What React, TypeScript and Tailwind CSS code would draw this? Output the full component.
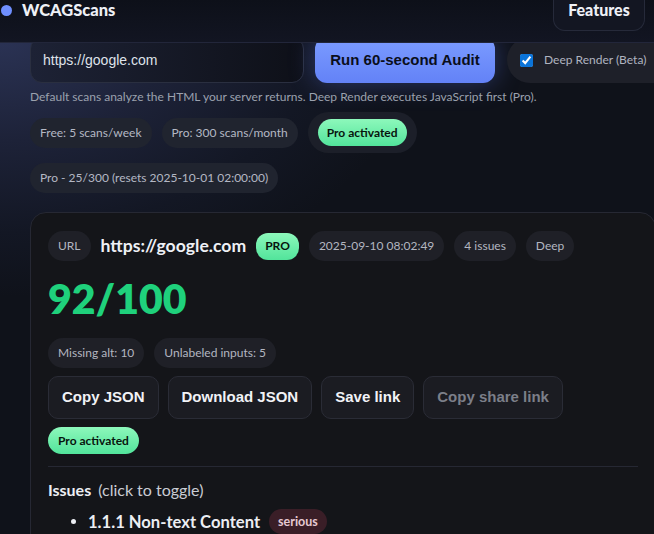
import React from 'react';

const BODY = { fontFamily: 'Lato, "Noto Sans", sans-serif' };
const CONTROL = { fontFamily: '"Liberation Sans", Arial, sans-serif' };

function Chip({ children, dark }: { children: React.ReactNode; dark?: boolean }) {
  return (
    <span
      className={`inline-flex items-center h-[30px] px-[10px] rounded-full text-[12px] whitespace-nowrap ${
        dark ? 'bg-[#1f2027] text-[#b3b6c0]' : 'bg-[#20242f] text-[#b4b8c4]'
      }`}
    >
      {children}
    </span>
  );
}

function GreenPill({ children, className = '' }: { children: React.ReactNode; className?: string }) {
  return (
    <span
      className={`inline-flex items-center justify-center font-bold text-[#07140d] bg-[linear-gradient(180deg,#8df8bb,#52e49b)] whitespace-nowrap ${className}`}
    >
      {children}
    </span>
  );
}

const ACTIONS = [
  { label: 'Copy JSON', disabled: false },
  { label: 'Download JSON', disabled: false },
  { label: 'Save link', disabled: false },
  { label: 'Copy share link', disabled: true },
];

export default function App() {
  return (
    <div className="min-h-screen w-full overflow-hidden bg-[#0f121a] text-white" style={BODY}>
      {/* Header */}
      <header className="relative z-10 h-[43px] flex items-start justify-between bg-[linear-gradient(180deg,#0d1019,#121522)] border-b border-[#22263a]">
        <div className="flex items-center gap-[10px] pl-[1px] h-[20px]">
          <span className="w-[11px] h-[11px] rounded-full bg-[#6f8fff]" />
          <span className="text-[16.5px] font-black text-[#eef0f6]">WCAGScans</span>
        </div>
        <button className="h-[31px] w-[92px] mr-[9px] pb-[10px] flex items-center justify-center rounded-b-xl border border-t-0 border-[#262a3a] bg-[#131622] text-[16px] font-black text-[#eef0f6]">
          Features
        </button>
      </header>

      {/* Main */}
      <main className="relative -mt-[6px] pl-[30px] pb-10 bg-[radial-gradient(ellipse_420px_260px_at_0%_0%,#2b3355_0%,#1d2238_40%,#131724_75%,#0f121a_100%)]">
        <div className="w-[626px]">
          {/* Audit row */}
          <div className="flex items-center" style={CONTROL}>
            <div className="w-[274px] h-[46px] shrink-0 flex items-center pl-[12px] rounded-xl border border-[#2a2f40] bg-[linear-gradient(90deg,#1d2235,#0e1018)] text-[14px] text-[#dfe2ea]">
              https://google.com
            </div>
            <button className="ml-[11px] w-[180px] h-[46px] shrink-0 rounded-xl bg-[linear-gradient(180deg,#7c9cff,#6382f7)] text-[15px] font-bold text-[#0a0e1a] shadow-[0_0_26px_rgba(100,130,255,0.35)]">
              Run 60-second Audit
            </button>
            <label
              className="ml-[12px] h-[46px] w-[180px] shrink-0 flex items-center gap-[11px] pl-[13px] rounded-full bg-[#1e2029] text-[12px] text-[#b0b4c0]"
              style={BODY}
            >
              <input type="checkbox" defaultChecked className="w-[13px] h-[13px] accent-[#0b74d9]" />
              Deep Render (Beta)
            </label>
          </div>

          <p className="mt-[6px] text-[12px] leading-[16px] text-[#9ba1ae] whitespace-nowrap">
            Default scans analyze the HTML your server returns. Deep Render executes JavaScript first (Pro).
          </p>

          {/* Plan chips */}
          <div className="mt-[7px] flex items-center gap-[10px]">
            <Chip>Free: 5 scans/week</Chip>
            <Chip>Pro: 300 scans/month</Chip>
            <div className="h-[41px] flex items-center px-[10px] rounded-full bg-[#1c1f29]">
              <GreenPill className="h-[27px] px-[9px] rounded-full text-[12px]">Pro activated</GreenPill>
            </div>
          </div>
          <div className="mt-[10px] flex">
            <Chip>Pro - 25/300 (resets 2025-10-01 02:00:00)</Chip>
          </div>

          {/* Result card */}
          <section className="mt-[19px] rounded-2xl border border-[#262833] bg-[#141519] pt-[18px] pl-[17px] pr-[17px] pb-6">
            <div className="flex items-center gap-[10px] h-[30px]">
              <Chip dark>URL</Chip>
              <span className="text-[17.6px] font-bold text-[#eef0f5]">https://google.com</span>
              <GreenPill className="h-[27px] px-[9px] rounded-[12px] text-[12px]">PRO</GreenPill>
              <Chip dark>2025-09-10 08:02:49</Chip>
              <Chip dark>4 issues</Chip>
              <Chip dark>Deep</Chip>
            </div>

            <div className="mt-[14px] h-[48px] leading-[48px] text-[41px] font-extrabold text-[#1fd17c]">92/100</div>

            <div className="mt-[15px] flex gap-[10px]">
              <Chip dark>Missing alt: 10</Chip>
              <Chip dark>Unlabeled inputs: 5</Chip>
            </div>

            <div className="mt-[8px] flex gap-[9px]" style={CONTROL}>
              {ACTIONS.map((a) => (
                <button
                  key={a.label}
                  disabled={a.disabled}
                  className={`h-[43px] px-[13px] rounded-[10px] border border-[#2a2c36] bg-[#1b1c22] text-[15px] font-bold whitespace-nowrap ${
                    a.disabled ? 'text-[#7c7f89]' : 'text-[#f1f2f6]'
                  }`}
                >
                  {a.label}
                </button>
              ))}
            </div>

            <div className="mt-[8px] flex">
              <GreenPill className="h-[27px] px-[10px] rounded-full text-[12px]">Pro activated</GreenPill>
            </div>

            <div className="mt-[12px] h-px bg-[#262833]" />

            <h3 className="mt-[13px] text-[16px] leading-[20px] text-[#c9ccd4]">
              <span className="font-bold text-[#eceef3]">Issues</span>
              <span className="ml-[7px]">(click to toggle)</span>
            </h3>

            <ul className="mt-[8px] pl-[40px] list-disc text-[#eceef3]">
              <li>
                <span className="inline-flex items-center gap-[9px] h-[25px] align-middle">
                  <span className="text-[16.6px] font-bold">1.1.1 Non-text Content</span>
                  <span className="h-[25px] inline-flex items-center px-[9px] rounded-full bg-[#3a1e27] text-[12.5px] font-bold text-[#e6c9d1]">
                    serious
                  </span>
                </span>
              </li>
            </ul>
          </section>
        </div>
      </main>
    </div>
  );
}
